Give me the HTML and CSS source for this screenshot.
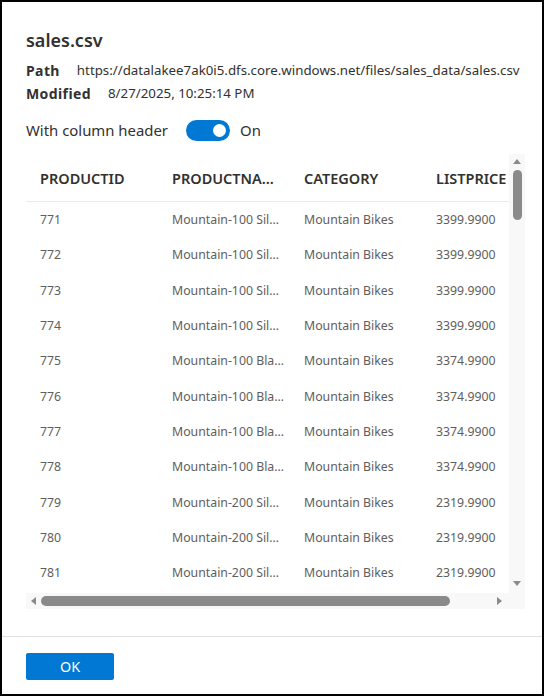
FILE: index.html
```html
<!DOCTYPE html>
<html>
<head>
<meta charset="utf-8">
<link rel="stylesheet" href="styles.css">
</head>
<body>
<div class="dialog">
  <div class="content">
    <h1 class="title">sales.csv</h1>
    <div class="meta">
      <div class="meta-row"><span class="label">Path</span><span class="value">https://datalakee7ak0i5.dfs.core.windows.net/files/sales_data/sales.csv</span></div>
      <div class="meta-row"><span class="label">Modified</span><span class="value">8/27/2025, 10:25:14 PM</span></div>
    </div>
    <div class="toggle-row">
      <span class="toggle-label">With column header</span>
      <span class="toggle"><span class="knob"></span></span>
      <span class="toggle-state">On</span>
    </div>
    <div class="grid-frame">
      <div class="viewport">
        <div class="table">
          <div class="row head">
            <div class="cell">PRODUCTID</div>
            <div class="cell">PRODUCTNAME</div>
            <div class="cell">CATEGORY</div>
            <div class="cell">LISTPRICE</div>
          </div>
          <div class="row"><div class="cell">771</div><div class="cell">Mountain-100 Silver, 38</div><div class="cell">Mountain Bikes</div><div class="cell">3399.9900</div></div>
          <div class="row"><div class="cell">772</div><div class="cell">Mountain-100 Silver, 42</div><div class="cell">Mountain Bikes</div><div class="cell">3399.9900</div></div>
          <div class="row"><div class="cell">773</div><div class="cell">Mountain-100 Silver, 44</div><div class="cell">Mountain Bikes</div><div class="cell">3399.9900</div></div>
          <div class="row"><div class="cell">774</div><div class="cell">Mountain-100 Silver, 48</div><div class="cell">Mountain Bikes</div><div class="cell">3399.9900</div></div>
          <div class="row"><div class="cell">775</div><div class="cell">Mountain-100 Black, 38</div><div class="cell">Mountain Bikes</div><div class="cell">3374.9900</div></div>
          <div class="row"><div class="cell">776</div><div class="cell">Mountain-100 Black, 42</div><div class="cell">Mountain Bikes</div><div class="cell">3374.9900</div></div>
          <div class="row"><div class="cell">777</div><div class="cell">Mountain-100 Black, 44</div><div class="cell">Mountain Bikes</div><div class="cell">3374.9900</div></div>
          <div class="row"><div class="cell">778</div><div class="cell">Mountain-100 Black, 48</div><div class="cell">Mountain Bikes</div><div class="cell">3374.9900</div></div>
          <div class="row"><div class="cell">779</div><div class="cell">Mountain-200 Silver, 38</div><div class="cell">Mountain Bikes</div><div class="cell">2319.9900</div></div>
          <div class="row"><div class="cell">780</div><div class="cell">Mountain-200 Silver, 42</div><div class="cell">Mountain Bikes</div><div class="cell">2319.9900</div></div>
          <div class="row"><div class="cell">781</div><div class="cell">Mountain-200 Silver, 46</div><div class="cell">Mountain Bikes</div><div class="cell">2319.9900</div></div>
          <div class="row"><div class="cell">782</div><div class="cell">Mountain-200 Black, 38</div><div class="cell">Mountain Bikes</div><div class="cell">2294.9900</div></div>
        </div>
      </div>
      <div class="vscroll">
        <span class="arrow up"></span>
        <div class="vtrack"><div class="vthumb"></div></div>
        <span class="arrow down"></span>
      </div>
      <div class="hscroll">
        <span class="arrow left"></span>
        <div class="htrack"><div class="hthumb"></div></div>
        <span class="arrow right"></span>
      </div>
      <div class="corner"></div>
    </div>
  </div>
  <div class="footer">
    <button class="btn-primary">OK</button>
  </div>
</div>
</body>
</html>
```

FILE: styles.css
```css
* { box-sizing: border-box; }
html, body { margin: 0; padding: 0; background: #fff; }
body {
  font-family: "Noto Sans", "Open Sans", sans-serif;
  color: #323130;
}
.dialog {
  width: 544px;
  height: 696px;
  border: 2px solid #000;
  display: flex;
  flex-direction: column;
}
.content {
  padding: 24px 0 26px 24px;
  flex: 1;
}
.title {
  margin: 0;
  font-size: 18px;
  font-weight: 600;
  line-height: 28px;
  height: 34px;
}
.meta { display: flex; flex-direction: column; margin-top: -1px; }
.meta-row {
  display: flex;
  align-items: center;
  height: 22px;
  font-size: 13.3px;
}
.meta-row:last-child { margin-top: 1px; }
.label { font-weight: 700; font-size: 14px; letter-spacing: 0.4px; margin-right: 17px; }
.toggle-row {
  display: flex;
  align-items: center;
  margin-top: 14px;
  height: 24px;
  font-size: 14.9px;
}
.toggle {
  margin-left: 18px;
  width: 44px;
  height: 21px;
  border-radius: 11px;
  background: #0078d4;
  display: flex;
  align-items: center;
  justify-content: flex-end;
  padding-right: 4px;
}
.knob { width: 13px; height: 13px; border-radius: 50%; background: #fff; }
.toggle-state { margin-left: 10px; }
.grid-frame {
  margin-top: 12px;
  display: grid;
  grid-template-columns: 483px 16px;
  grid-template-rows: 439px 16px;
}
.viewport { overflow: hidden; }
.table { width: 528px; }
.row {
  display: grid;
  grid-template-columns: 132px 132px 132px 132px;
  height: 35.3px;
  align-items: center;
  color: #605e5c;
  font-size: 12.3px;
}
.row.head {
  height: 48px;
  border-bottom: 1px solid #edebe9;
  color: #323130;
  font-weight: 600;
  font-size: 14.5px;
  padding-top: 1px;
  padding-bottom: 1px;
}
.row.head .cell { padding-right: 12px; }
.cell {
  padding: 0 5px 0 14px;
  white-space: nowrap;
  overflow: hidden;
  text-overflow: ellipsis;
}
.vscroll, .hscroll, .corner { background: #f8f8f8; }
.vscroll {
  display: flex;
  flex-direction: column;
  align-items: center;
  padding: 4px 0;
}
.vtrack { flex: 1; width: 100%; display: flex; justify-content: center; padding-top: 6px; }
.vthumb { width: 9px; height: 50px; border-radius: 5px; background: #8a8a8a; }
.hscroll {
  display: flex;
  align-items: center;
  padding: 0 7px 0 5px;
}
.htrack { flex: 1; height: 100%; display: flex; align-items: center; padding-left: 5px; }
.hthumb { width: 409px; height: 10px; border-radius: 5px; background: #8a8a8a; }
.arrow { width: 0; height: 0; border-style: solid; border-color: transparent; }
.arrow.up { border-width: 0 4px 5px 4px; border-bottom-color: #8a8a8a; margin-top: 1px; }
.arrow.down { border-width: 5px 4px 0 4px; border-top-color: #8a8a8a; margin-bottom: 3px; }
.arrow.left { border-width: 4px 5px 4px 0; border-right-color: #8a8a8a; }
.arrow.right { border-width: 4px 0 4px 5px; border-left-color: #8a8a8a; }
.footer {
  border-top: 1px solid #e1dfdd;
  padding: 16px 24px 0 24px;
  height: 58px;
}
.btn-primary {
  width: 88px;
  height: 27px;
  border: none;
  border-radius: 2px;
  background: #0078d4;
  color: #fff;
  font-family: "Noto Sans", "Open Sans", sans-serif;
  font-size: 14.4px;
  padding: 0;
}
```
